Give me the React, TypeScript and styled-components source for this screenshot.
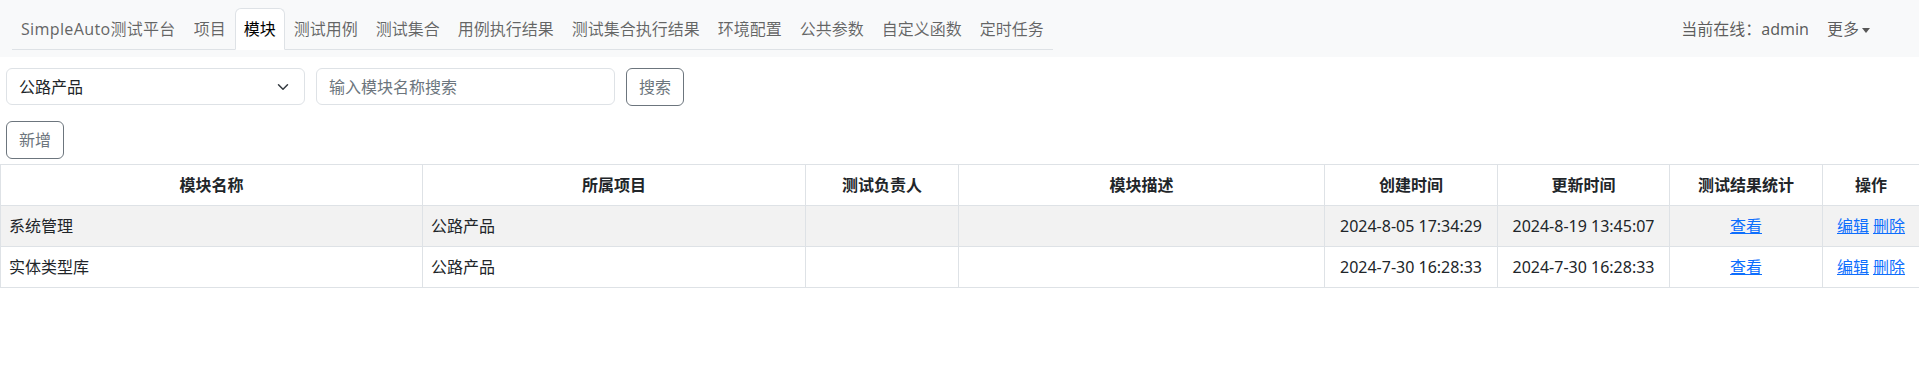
import React from "react";
import styled, { createGlobalStyle } from "styled-components";

const GlobalStyle = createGlobalStyle`
  * { box-sizing: border-box; }
  body {
    margin: 0;
    background: #fff;
    color: #212529;
    font-family: "Noto Sans", "Noto Sans CJK SC", sans-serif;
    font-size: 16px;
    line-height: 1.5;
  }
`;

const TopBar = styled.div`
  display: flex;
  align-items: flex-start;
  justify-content: space-between;
  height: 57px;
  padding: 8px 49px 0 12px;
  background: #f8f9fa;
`;

const Tabs = styled.ul`
  display: inline-flex;
  margin: 0;
  padding: 0;
  list-style: none;
  border-bottom: 1px solid #dee2e6;
`;

const Tab = styled.li<{ $active?: boolean }>`
  margin-bottom: -1px;
  padding: 8px 8px;
  border: 1px solid ${(p) => (p.$active ? "#dee2e6" : "transparent")};
  border-bottom-color: ${(p) => (p.$active ? "#fff" : "transparent")};
  border-radius: 6px 6px 0 0;
  background: ${(p) => (p.$active ? "#fff" : "transparent")};
  color: ${(p) => (p.$active ? "#000" : "rgba(0, 0, 0, 0.6)")};
  white-space: nowrap;
  cursor: pointer;
`;

const Brand = styled.span`
  letter-spacing: 0.3px;
`;

const UserArea = styled.div`
  display: flex;
  align-items: center;
  gap: 18px;
  padding-top: 9px;
  color: rgba(0, 0, 0, 0.65);
`;

const More = styled.span`
  display: inline-flex;
  align-items: center;
  gap: 3px;

  &::after {
    content: "";
    display: inline-block;
    border-top: 5px solid currentColor;
    border-left: 4px solid transparent;
    border-right: 4px solid transparent;
    margin-top: 2px;
  }
`;

const Content = styled.div`
  padding: 11px 0 0;
`;

const SearchRow = styled.div`
  display: flex;
  gap: 11px;
  padding: 0 6px;
`;

const Field = styled.div`
  position: relative;
  width: 299px;
  height: 37px;
`;

const SelectBox = styled.select`
  width: 100%;
  height: 100%;
  padding: 0 36px 0 12px;
  border: 1px solid #dee2e6;
  border-radius: 6px;
  background: #fff;
  color: #212529;
  font: inherit;
  appearance: none;
`;

const Chevron = styled.svg`
  position: absolute;
  right: 16px;
  top: 13px;
  pointer-events: none;
`;

const TextInput = styled.input`
  width: 299px;
  height: 37px;
  padding: 0 12px;
  border: 1px solid #dee2e6;
  border-radius: 6px;
  font: inherit;
  color: #212529;

  &::placeholder {
    color: #6c757d;
  }
`;

const OutlineButton = styled.button`
  height: 38px;
  padding: 0 12px;
  border: 1px solid #6c757d;
  border-radius: 6px;
  background: #fff;
  color: #6c757d;
  font: inherit;
  cursor: pointer;
`;

const ActionRow = styled.div`
  padding: 15px 6px 5px;
`;

const Table = styled.table`
  width: 100%;
  border-collapse: collapse;
  table-layout: fixed;
`;

const Th = styled.th`
  padding: 8px;
  border: 1px solid #dee2e6;
  font-weight: 700;
  text-align: center;
  color: #212529;
`;

const Tr = styled.tr<{ $striped?: boolean }>`
  background: ${(p) => (p.$striped ? "#f2f2f2" : "#fff")};
`;

const Td = styled.td<{ $center?: boolean }>`
  height: 41px;
  padding: 8px;
  border: 1px solid #dee2e6;
  text-align: ${(p) => (p.$center ? "center" : "left")};
  white-space: nowrap;
`;

const Link = styled.a`
  color: #0d6efd;
  text-decoration: underline;
  cursor: pointer;

  & + & {
    margin-left: 4px;
  }
`;

const tabs = [
  "SimpleAuto测试平台",
  "项目",
  "模块",
  "测试用例",
  "测试集合",
  "用例执行结果",
  "测试集合执行结果",
  "环境配置",
  "公共参数",
  "自定义函数",
  "定时任务",
];

const columns = [
  { title: "模块名称", width: 422 },
  { title: "所属项目", width: 383 },
  { title: "测试负责人", width: 153 },
  { title: "模块描述", width: 366 },
  { title: "创建时间", width: 173 },
  { title: "更新时间", width: 172 },
  { title: "测试结果统计", width: 153 },
  { title: "操作", width: 97 },
];

const modules = [
  {
    name: "系统管理",
    project: "公路产品",
    owner: "",
    desc: "",
    created: "2024-8-05 17:34:29",
    updated: "2024-8-19 13:45:07",
  },
  {
    name: "实体类型库",
    project: "公路产品",
    owner: "",
    desc: "",
    created: "2024-7-30 16:28:33",
    updated: "2024-7-30 16:28:33",
  },
];

const App = () => {
  return (
    <>
      <GlobalStyle />
      <TopBar>
        <Tabs>
          {tabs.map((t, i) => (
            <Tab key={t} $active={t === "模块"}>
              {i === 0 ? <Brand>{t}</Brand> : t}
            </Tab>
          ))}
        </Tabs>
        <UserArea>
          <span>当前在线：admin</span>
          <More>更多</More>
        </UserArea>
      </TopBar>
      <Content>
        <SearchRow>
          <Field>
            <SelectBox defaultValue="公路产品">
              <option>公路产品</option>
            </SelectBox>
            <Chevron width="12" height="12" viewBox="0 0 16 16">
              <path
                d="M2 5l6 6 6-6"
                fill="none"
                stroke="#343a40"
                strokeWidth="2"
                strokeLinecap="round"
                strokeLinejoin="round"
              />
            </Chevron>
          </Field>
          <TextInput placeholder="输入模块名称搜索" />
          <OutlineButton>搜索</OutlineButton>
        </SearchRow>
        <ActionRow>
          <OutlineButton>新增</OutlineButton>
        </ActionRow>
        <Table>
          <colgroup>
            {columns.map((c) => (
              <col key={c.title} style={{ width: c.width }} />
            ))}
          </colgroup>
          <thead>
            <tr>
              {columns.map((c) => (
                <Th key={c.title}>{c.title}</Th>
              ))}
            </tr>
          </thead>
          <tbody>
            {modules.map((m, i) => (
              <Tr key={m.name} $striped={i % 2 === 0}>
                <Td>{m.name}</Td>
                <Td>{m.project}</Td>
                <Td>{m.owner}</Td>
                <Td>{m.desc}</Td>
                <Td $center>{m.created}</Td>
                <Td $center>{m.updated}</Td>
                <Td $center>
                  <Link>查看</Link>
                </Td>
                <Td $center>
                  <Link>编辑</Link>
                  <Link>删除</Link>
                </Td>
              </Tr>
            ))}
          </tbody>
        </Table>
      </Content>
    </>
  );
};

export default App;
